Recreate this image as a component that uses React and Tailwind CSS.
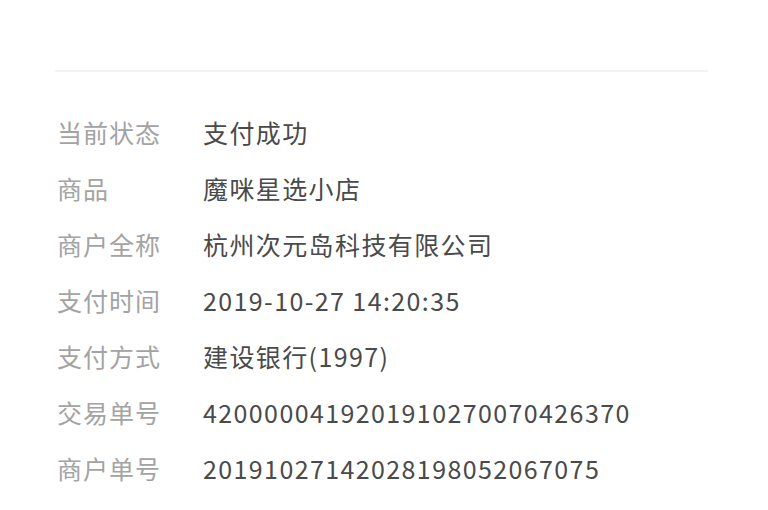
export default function App() {
  const rows = [
    ["当前状态", "支付成功"],
    ["商品", "魔咪星选小店"],
    ["商户全称", "杭州次元岛科技有限公司"],
    ["支付时间", "2019-10-27 14:20:35"],
    ["支付方式", "建设银行(1997)"],
    ["交易单号", "4200000419201910270070426370"],
    ["商户单号", "20191027142028198052067075"],
  ];

  return (
    <div
      className="w-[768px] h-[510px] bg-white overflow-hidden"
      style={{ fontFamily: '"Noto Sans CJK SC", "Noto Sans", sans-serif' }}
    >
      <div className="pt-[70px] pl-[55px] pr-[60px]">
        <div className="h-[2px] bg-[#f3f3f3]" />
      </div>
      <div className="mt-[33px] pl-[57px]">
        {rows.map(([label, value]) => (
          <div key={label} className="flex items-center h-[56px]">
            <div className="w-[146px] text-[25px] text-[#a3a3a3] tracking-[1px]">{label}</div>
            <div className="text-[25px] text-[#4a4a4a] tracking-[1.4px]">{value}</div>
          </div>
        ))}
      </div>
    </div>
  );
}
